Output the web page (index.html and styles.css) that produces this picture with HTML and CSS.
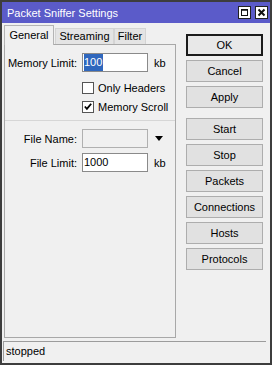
FILE: index.html
```html
<!DOCTYPE html>
<html>
<head>
<meta charset="utf-8">
<link rel="stylesheet" href="styles.css">
</head>
<body>
<div class="window">
  <div class="titlebar">
    <span class="title">Packet Sniffer Settings</span>
    <span class="tbtn">
      <svg width="13" height="13" viewBox="0 0 13 13"><rect x="0.5" y="0.5" width="12" height="12" fill="#fff" stroke="#222"/><rect x="3.5" y="3.5" width="6" height="6" fill="none" stroke="#111"/><line x1="3" y1="4" x2="10" y2="4" stroke="#111" stroke-width="1.5"/></svg>
    </span>
    <span class="tbtn">
      <svg width="13" height="13" viewBox="0 0 13 13"><rect x="0.5" y="0.5" width="12" height="12" fill="#fff" stroke="#222"/><path d="M3.5 3.5 L9.5 9.5 M9.5 3.5 L3.5 9.5" stroke="#111" stroke-width="2"/></svg>
    </span>
  </div>
  <div class="main">
    <div class="left">
      <div class="tabs">
        <div class="tab active t-general">General</div>
        <div class="tab t-streaming">Streaming</div>
        <div class="tab t-filter">Filter</div>
      </div>
      <div class="panel">
        <div class="row r1">
          <span class="label">Memory Limit:</span>
          <span class="field"><span class="sel">100</span></span>
          <span class="unit">kb</span>
        </div>
        <div class="row chk r2">
          <span class="cbox"></span>
          <span class="ctext">Only Headers</span>
        </div>
        <div class="row chk">
          <span class="cbox"><svg width="11" height="11" viewBox="0 0 11 11"><path d="M2 5.5 L4.3 8 L9 2.5" fill="none" stroke="#000" stroke-width="2"/></svg></span>
          <span class="ctext">Memory Scroll</span>
        </div>
        <div class="sep"></div>
        <div class="row r4">
          <span class="label">File Name:</span>
          <span class="field disabled"></span>
          <span class="arrow"></span>
        </div>
        <div class="row r5">
          <span class="label">File Limit:</span>
          <span class="field">1000</span>
          <span class="unit">kb</span>
        </div>
      </div>
    </div>
    <div class="right">
      <div class="btn ok">OK</div>
      <div class="btn">Cancel</div>
      <div class="btn gap">Apply</div>
      <div class="btn">Start</div>
      <div class="btn">Stop</div>
      <div class="btn">Packets</div>
      <div class="btn">Connections</div>
      <div class="btn">Hosts</div>
      <div class="btn">Protocols</div>
    </div>
  </div>
  <div class="status">stopped</div>
</div>
</body>
</html>
```
FILE: styles.css
```css
body {
  margin: 0;
  font-family: "Liberation Sans", Arial, sans-serif;
  font-size: 11px;
  color: #000;
}
.window {
  width: 272px;
  height: 365px;
  box-sizing: border-box;
  border: 2px solid #3d3d3d;
  background: #f0f0f0;
  display: flex;
  flex-direction: column;
}
.titlebar {
  height: 21px;
  flex: none;
  background: #5b5bc9;
  color: #fff;
  display: flex;
  align-items: center;
  padding-left: 5px;
  padding-right: 2px;
  font-size: 11px;
}
.title { flex: 1; }
.tbtn {
  width: 13px;
  height: 13px;
  margin-left: 4px;
  display: flex;
}
.main {
  flex: 1;
  display: flex;
  min-height: 0;
}
.left {
  padding: 2px 0 0 2px;
  display: flex;
  flex-direction: column;
}
.tabs {
  height: 19px;
  display: flex;
  align-items: flex-end;
  flex: none;
}
.tab {
  box-sizing: border-box;
  height: 16px;
  line-height: 15px;
  border: 1px solid #d4d4d4;
  border-bottom: none;
  background: #e4e4e4;
  text-align: center;
}
.tab.active {
  height: 20px;
  line-height: 18px;
  margin-bottom: -1px;
  background: #f0f0f0;
  border-color: #b4b4b4;
  position: relative;
  z-index: 1;
}
.t-general { width: 50px; }
.t-streaming { width: 59px; margin-left: 1px; }
.t-filter { width: 32px; }
.panel {
  width: 172px;
  height: 294px;
  box-sizing: border-box;
  border: 1px solid #a8a8a8;
  background: #f0f0f0;
}
.row {
  display: flex;
  align-items: center;
  height: 19px;
}
.r1 { margin-top: 8px; }
.r2 { margin-top: 6px; }
.r4 { margin-top: 8px; }
.r5 { margin-top: 5px; }
.label {
  width: 72px;
  text-align: right;
  margin-right: 5px;
}
.field {
  box-sizing: border-box;
  width: 66px;
  height: 19px;
  border: 1px solid #8a8a8a;
  background: #fff;
  padding-left: 1px;
  line-height: 17px;
  display: flex;
  align-items: stretch;
}
.field.disabled {
  background: #f0f0f0;
  border-color: #b0b0b0;
}
.sel {
  background: #2f67bd;
  color: #fff;
  padding-right: 1px;
}
.unit { margin-left: 6px; }
.chk { padding-left: 77px; }
.cbox {
  box-sizing: border-box;
  width: 12px;
  height: 12px;
  border: 1px solid #555;
  background: #fff;
  display: flex;
  align-items: center;
  justify-content: center;
}
.ctext { margin-left: 4px; }
.sep {
  height: 1px;
  background: #d6d6d6;
  margin-top: 4px;
}
.arrow {
  width: 0;
  height: 0;
  margin-left: 7px;
  border-left: 4px solid transparent;
  border-right: 4px solid transparent;
  border-top: 5px solid #000;
}
.right {
  margin-left: 10px;
  padding-top: 11px;
  width: 77px;
  display: flex;
  flex-direction: column;
}
.btn {
  box-sizing: border-box;
  height: 22px;
  border: 1px solid #adadad;
  background: #e1e1e1;
  display: flex;
  align-items: center;
  justify-content: center;
  margin-bottom: 4px;
  flex: none;
}
.btn.ok {
  border: 2px solid #1c1c1c;
  background: #e8e8e8;
}
.btn.gap { margin-bottom: 10px; }
.status {
  flex: none;
  height: 20px;
  box-sizing: border-box;
  margin: 3px 4px 2px 1px;
  border-top: 1px solid #9c9c9c;
  border-left: 1px solid #9c9c9c;
  background: #f0f0f0;
  padding-left: 2px;
  line-height: 19px;
}
```
